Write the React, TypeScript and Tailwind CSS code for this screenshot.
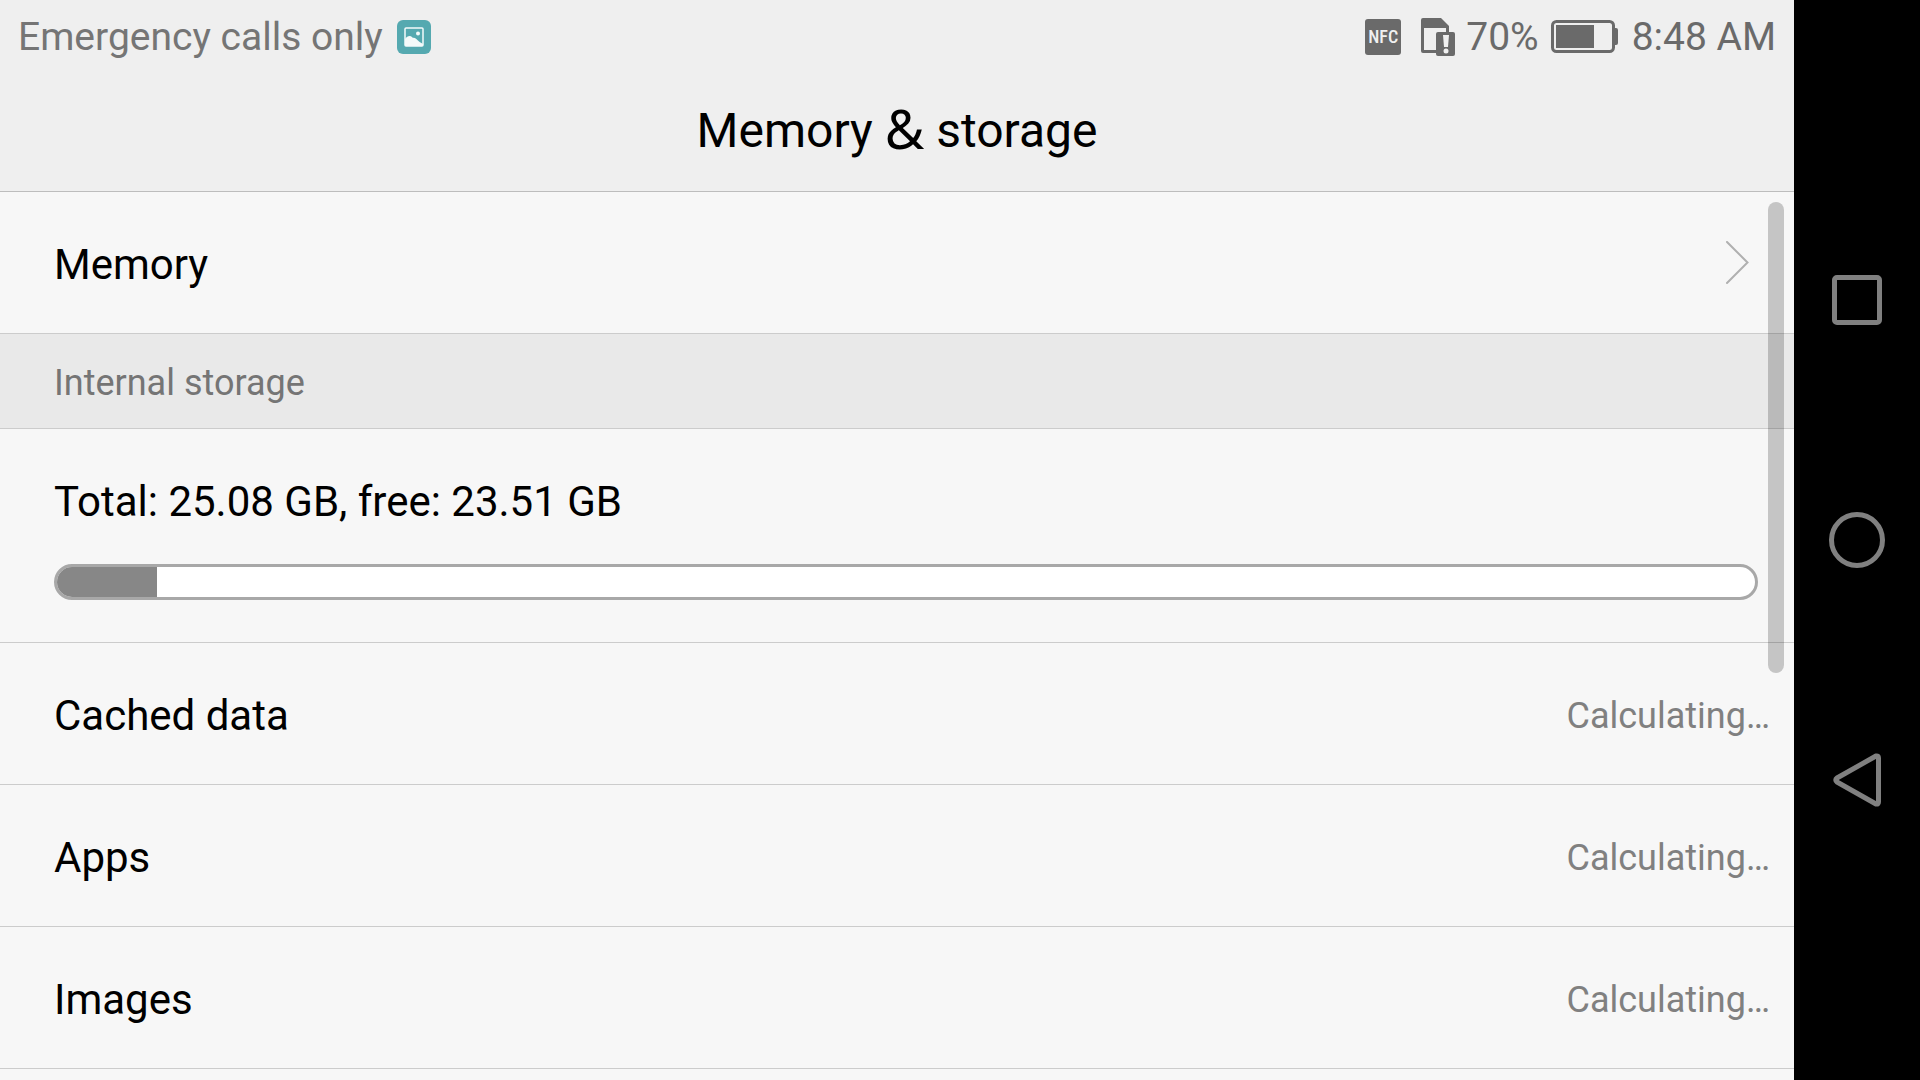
const rows = [
  { name: "Cached data", value: "Calculating…" },
  { name: "Apps", value: "Calculating…" },
  { name: "Images", value: "Calculating…" },
];

const storage = { total: "25.08 GB", free: "23.51 GB", usedPercent: 5.9 };

function PictureIcon() {
  return (
    <svg width="34" height="34" viewBox="0 0 34 34" aria-hidden="true">
      <rect width="34" height="34" rx="6" fill="#55a9b0" />
      <rect x="8" y="8" width="18" height="18" rx="1" fill="none" stroke="#f4fafa" strokeWidth="1.5" />
      <circle cx="21" cy="13.500" r="2" fill="#f4fafa" />
      <path d="M8 19c2-3 5-4 7-2l1 1c3-1 5 4 10 6v2H8z" fill="#f4fafa" />
    </svg>
  );
}

function NfcIcon() {
  return (
    <span className="flex size-9 items-center justify-center rounded-[3px] bg-[#6a6a6a] font-['Roboto_Condensed','Roboto',sans-serif] text-[18px] font-medium leading-9 text-[#f0f0f0]">
      NFC
    </span>
  );
}

function SimIcon() {
  return (
    <svg width="35" height="38" viewBox="0 0 35 38" role="img" aria-label="No SIM card">
      <path d="M2 0h18l8 8v6h-3v-4H3v22h12v3H2a2 2 0 0 1-2-2V2a2 2 0 0 1 2-2z" fill="#6a6a6a" />
      <rect x="15" y="14" width="19" height="24" rx="2" fill="#6a6a6a" />
      <path d="M22 17h6l-1 12h-4z" fill="#f0f0f0" />
      <circle cx="25" cy="33" r="2.500" fill="#f0f0f0" />
    </svg>
  );
}

function BatteryIcon() {
  return (
    <svg width="67" height="34" viewBox="0 0 67 34" role="img" aria-label="Battery">
      <rect x="1.500" y="1.500" width="61" height="30" rx="4" fill="none" stroke="#6a6a6a" strokeWidth="3" />
      <rect x="5" y="5" width="38" height="23" fill="#6a6a6a" />
      <path d="M64 8h1a2 2 0 0 1 2 2v13a2 2 0 0 1-2 2h-1z" fill="#6a6a6a" />
    </svg>
  );
}

export default function App() {
  return (
    <div className="flex h-screen overflow-hidden bg-black font-['Roboto',sans-serif] text-black">
      <main className="relative flex min-w-0 flex-1 flex-col bg-[#f7f7f7]">
        <header className="border-b border-[#bdbdbd] bg-[#efefef]">
          <div className="flex h-[74px] items-center justify-between pr-[18px] pl-[18px] text-[39px] text-[#757575]">
            <div className="flex items-center gap-[14px]">
              <span>Emergency calls only</span>
              <PictureIcon />
            </div>
            <div className="flex items-center text-[#6a6a6a]">
              <NfcIcon />
              <span className="ml-5"><SimIcon /></span>
              <span className="ml-[10px]">70%</span>
              <span className="ml-3"><BatteryIcon /></span>
              <span className="ml-[14px]">8:48 AM</span>
            </div>
          </div>
          <h1 className="pt-[26px] pb-[30px] text-center text-[48px] leading-[61px]">
            Memory <span className="align-[-2px] font-['Noto_Sans',sans-serif] text-[54px] leading-none">&amp;</span> storage
          </h1>
        </header>

        <button type="button" className="flex items-center justify-between border-b border-[#cccccc] pr-[45px] pl-[54px] text-left">
          <span className="pt-11 pb-10 text-[42px] leading-[57px]">Memory</span>
          <svg width="24" height="44" viewBox="0 0 24 44" fill="none" stroke="#b0b0b0" strokeWidth="2" strokeLinecap="round" aria-hidden="true">
            <path d="M2 1 22.500 21.500 2 42" />
          </svg>
        </button>

        <h2 className="border-b border-[#cccccc] bg-[#e9e9e9] px-[54px] pt-[27px] pb-[23px] text-[36px] leading-[44px] text-[#757575]">
          Internal storage
        </h2>

        <section className="border-b border-[#cccccc] pt-11 pr-9 pb-[42px] pl-[54px]">
          <p className="text-[42px] leading-[57px]">
            Total: {storage.total}, free: {storage.free}
          </p>
          <div
            role="progressbar"
            aria-label="Used storage"
            aria-valuenow={storage.usedPercent}
            className="mt-[34px] h-9 overflow-hidden rounded-full border-3 border-[#a8a8a8] bg-white"
          >
            <div className="h-full bg-[#878787]" style={{ width: `${storage.usedPercent}%` }} />
          </div>
        </section>

        <ul>
          {rows.map((row) => (
            <li key={row.name} className="flex items-center justify-between border-b border-[#cccccc] pt-11 pr-6 pb-10 pl-[54px]">
              <span className="text-[42px] leading-[57px]">{row.name}</span>
              <span className="text-[36px] leading-[44px] text-[#808080]">{row.value}</span>
            </li>
          ))}
        </ul>

        <div className="absolute top-[202px] right-[10px] h-[471px] w-4 rounded-full bg-black/20" />
      </main>

      <nav className="flex w-[126px] shrink-0 flex-col justify-center" aria-label="System navigation">
        <button type="button" aria-label="Recent apps" className="flex h-[240px] items-center justify-center">
          <span className="size-[50px] rounded-[5px] border-5 border-[#808080]" />
        </button>
        <button type="button" aria-label="Home" className="flex h-[240px] items-center justify-center">
          <span className="size-14 rounded-full border-5 border-[#808080]" />
        </button>
        <button type="button" aria-label="Back" className="flex h-[240px] items-center justify-center">
          <svg width="48" height="54" viewBox="0 0 48 54" fill="none" stroke="#808080" strokeWidth="5" strokeLinejoin="round" aria-hidden="true">
            <path d="M43 3q2.500-.5 2.500 2v44q0 2.500-2.500 2L4 29q-2.500-2 0-4z" />
          </svg>
        </button>
      </nav>
    </div>
  );
}
